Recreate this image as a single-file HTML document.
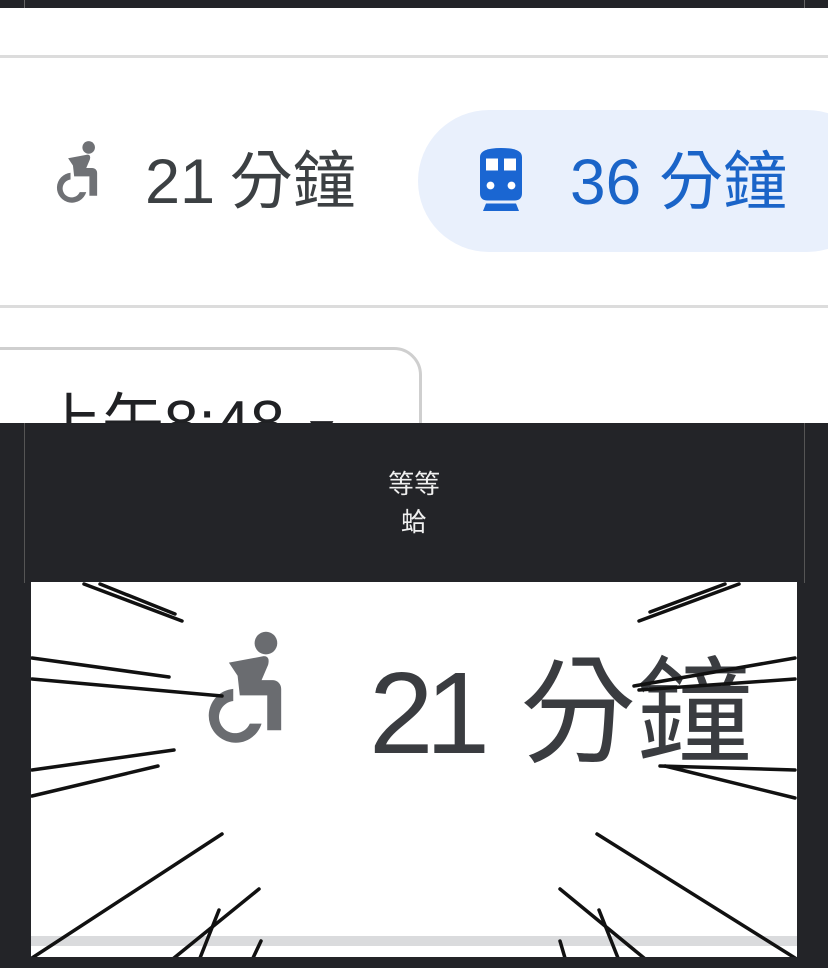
<!DOCTYPE html>
<html><head><meta charset="utf-8"><style>
*{margin:0;padding:0;box-sizing:border-box}
body{width:828px;height:968px;overflow:hidden;background:#fff;position:relative;font-family:"Liberation Sans","Noto Sans CJK TC",sans-serif}
.abs{position:absolute}
</style></head><body>
<div class="abs" style="left:0;top:0;width:828px;height:8px;background:#232428"></div>
<div class="abs" style="left:24px;top:0;width:1px;height:8px;background:#666"></div>
<div class="abs" style="left:804px;top:0;width:1px;height:8px;background:#666"></div>
<div class="abs" style="left:0;top:55px;width:828px;height:3px;background:#dcdcdc"></div>
<div class="abs" style="left:0;top:305px;width:828px;height:3px;background:#dcdcdc"></div>

<svg class="abs" style="left:50px;top:140px" width="58" height="68" viewBox="0 0 24 28">
<circle cx="16" cy="3" r="2.6" fill="#6f7175"/>
<path d="M7.5 7.5 L15.5 6 Q17 6 16.5 8 L15 11.5 H17.5 a2 2 0 0 1 2 2 V23 H16.3 V15 H10 L9.5 10.5 Z" fill="#6f7175"/>
<path d="M8.5 13.5 A6.2 6.2 0 1 0 15 21.5 H12.3 A3.7 3.7 0 1 1 8.5 16.3 Z" fill="#6f7175"/>
</svg>
<div class="abs" style="left:145px;top:142px;font-size:63px;line-height:80px;color:#3c4043;white-space:nowrap;word-spacing:-3px">21 分鐘</div>

<div class="abs" style="left:418px;top:110px;width:460px;height:142px;border-radius:71px;background:#e9f0fc"></div>
<svg class="abs" style="left:470px;top:148px" width="62" height="66" viewBox="0 0 20 22">
<path d="M3 3 Q3 0 10 0 Q17 0 17 3 V15 Q17 17.5 14.5 17.5 H5.5 Q3 17.5 3 15 Z" fill="#1a66d2"/>
<rect x="5" y="3.5" width="4" height="4" fill="#fff"/><rect x="11" y="3.5" width="4" height="4" fill="#fff"/>
<circle cx="6.5" cy="12.5" r="1.3" fill="#fff"/><circle cx="13.5" cy="12.5" r="1.3" fill="#fff"/>
<path d="M5 18.5 H15 L16 21 H4 Z" fill="#1a66d2"/>
</svg>
<div class="abs" style="left:570px;top:142px;font-size:64px;line-height:80px;color:#1a64c8;white-space:nowrap">36 分鐘</div>

<div class="abs" style="left:-40px;top:347px;width:462px;height:120px;border:3px solid #cfcfcf;border-radius:28px"></div>
<div class="abs" style="left:40px;top:384px;font-size:62px;line-height:80px;color:#202124;white-space:nowrap">上午8:48 <span style="font-size:40px">▼</span></div>

<div class="abs" style="left:0;top:423px;width:828px;height:545px;background:#232428"></div>
<div class="abs" style="left:24px;top:423px;width:1px;height:160px;background:#555"></div>
<div class="abs" style="left:804px;top:423px;width:1px;height:160px;background:#555"></div>
<div class="abs" style="left:0;top:465px;width:828px;text-align:center;color:#f0f0f0;font-size:26px;line-height:38px">等等<br>蛤</div>

<div class="abs" style="left:31px;top:582px;width:766px;height:375px;background:#fff;overflow:hidden">
<div class="abs" style="left:0;top:354px;width:766px;height:10px;background:#dadbdd"></div>
<svg class="abs" style="left:165px;top:48px" width="105" height="122" viewBox="0 0 24 28">
<circle cx="16" cy="3" r="2.6" fill="#6a6c70"/>
<path d="M7.5 7.5 L15.5 6 Q17 6 16.5 8 L15 11.5 H17.5 a2 2 0 0 1 2 2 V23 H16.3 V15 H10 L9.5 10.5 Z" fill="#6a6c70"/>
<path d="M8.5 13.5 A6.2 6.2 0 1 0 15 21.5 H12.3 A3.7 3.7 0 1 1 8.5 16.3 Z" fill="#6a6c70"/>
</svg>
<div class="abs" style="left:338px;top:56px;font-size:116px;line-height:150px;color:#3a3c40;white-space:nowrap"><span style="letter-spacing:-8px">21</span><span style="margin-left:38px">分鐘</span></div>
<svg class="abs" style="left:-31px;top:-582px" width="828" height="968" viewBox="0 0 828 968" stroke="#111" stroke-linecap="round">
<g stroke-width="3.5">
<line x1="84" y1="584" x2="182" y2="621"/><line x1="100" y1="584" x2="175" y2="614"/>
<line x1="739" y1="584" x2="639" y2="621"/><line x1="725" y1="584" x2="650" y2="612"/>
<line x1="32" y1="658" x2="169" y2="677"/><line x1="32" y1="679" x2="222" y2="696"/>
<line x1="32" y1="770" x2="174" y2="750"/><line x1="32" y1="796" x2="158" y2="766"/>
<line x1="795" y1="658" x2="634" y2="686"/><line x1="795" y1="679" x2="639" y2="690"/>
<line x1="795" y1="770" x2="660" y2="766"/><line x1="795" y1="798" x2="665" y2="766"/>
<line x1="32" y1="958" x2="222" y2="834"/><line x1="174" y1="958" x2="259" y2="889"/>
<line x1="200" y1="958" x2="219" y2="910"/><line x1="253" y1="958" x2="261" y2="941"/>
<line x1="795" y1="958" x2="597" y2="834"/><line x1="644" y1="958" x2="560" y2="889"/>
<line x1="618" y1="958" x2="599" y2="910"/><line x1="565" y1="958" x2="560" y2="941"/>
</g></svg>
</div>
</body></html>
